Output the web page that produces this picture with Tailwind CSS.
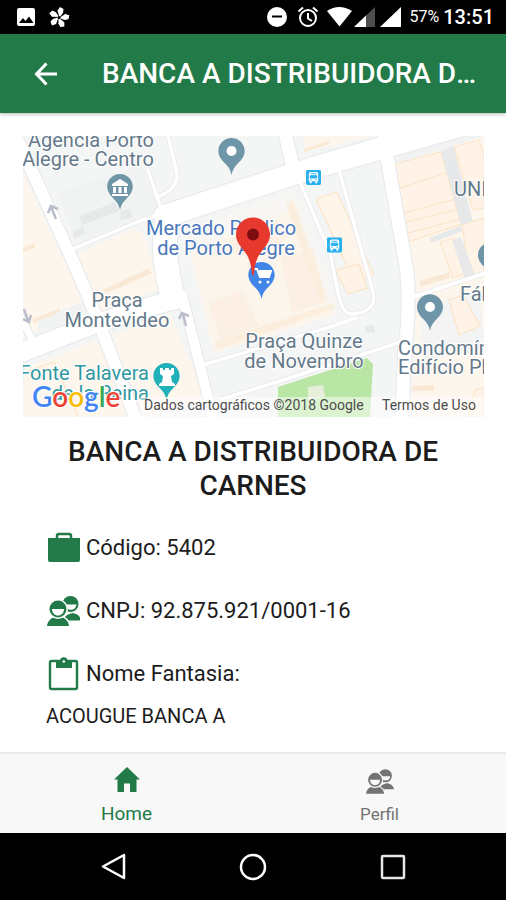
<!DOCTYPE html>
<html lang="pt-BR">
<head>
    <meta charset="UTF-8">
    <meta name="viewport" content="width=device-width, initial-scale=1.0">
    <title>Banca A Distribuidora de Carnes</title>
    <script src="https://cdn.jsdelivr.net/npm/@tailwindcss/browser@4"></script>
</head>
<body class="flex min-h-screen flex-col bg-white font-['Roboto',sans-serif] text-[#1c1c1c]">
    <svg class="hidden" aria-hidden="true">
        <symbol id="people" viewBox="0 0 34 30">
            <path d="M16 24.500c1-3.500 3-5.500 8-7l2-.5c4 1 7 2.500 8 7.500z" fill="currentColor"/>
            <circle cx="23.500" cy="8" r="8" fill="currentColor"/>
            <path d="M19 8.500h10.500c-.5 3.500-2.700 5.300-5.500 5.300s-5-2-5-5.300z" fill="var(--face)"/>
            <path d="M0 30c.5-4.500 3-7 6.500-8.500l4.500-1 4.500 1c3.500 1.500 6 4 6.500 8.500z" fill="currentColor" stroke="var(--face)" stroke-width="3" paint-order="stroke"/>
            <circle cx="11" cy="13" r="10" fill="var(--face)"/>
            <circle cx="11" cy="13" r="8.500" fill="currentColor"/>
            <path d="M5 13h12c0 4-2.700 6.500-6 6.500S5 17 5 13z" fill="var(--face)"/>
        </symbol>
        <symbol id="pin" viewBox="0 0 27 38">
            <path d="M13.500 0C6 0 0 6 0 13.300c0 5 3 9 6.500 12.500 4 4 6 7 7 12.200 1-5.200 3-8.200 7-12.200C24 22.300 27 18.300 27 13.300 27 6 21 0 13.500 0z" fill="currentColor"/>
        </symbol>
        <symbol id="bus" viewBox="0 0 16 16">
            <rect width="16" height="16" rx="1.500" fill="#29b0f0"/>
            <path d="M3 4.500Q3 2 5 2h6q2 0 2 2.500V12h-1v2h-2v-2H6v2H4v-2H3z" fill="#fff"/>
            <path d="M5 4h6M4.500 6h7v2.500h-7zM4.500 10.500h1.500M10 10.500h1.500" fill="#29b0f0" stroke="#29b0f0"/>
        </symbol>
        <symbol id="blade" viewBox="0 0 22 22">
            <path d="M11.500 11.500L9.500 4.500 12 1l3.500 2-.5 4z"/>
        </symbol>
    </svg>

    <!-- Status bar -->
    <div class="flex h-[34px] items-center justify-between bg-black pr-3 pl-4 text-white">
        <div class="flex items-center gap-3">
            <svg class="size-5" viewBox="0 0 20 20" fill="none">
                <rect x="1" y="1" width="18" height="18" rx="2" fill="#fff"/>
                <path d="M3 16l4-5 2.500 3 3.500-4.500 4.500 6.500z" fill="#000"/>
            </svg>
            <svg class="size-[22px]" viewBox="0 0 22 22" fill="#fff">
                <use href="#blade"/>
                <use href="#blade" transform="rotate(72 11 11.500)"/>
                <use href="#blade" transform="rotate(144 11 11.500)"/>
                <use href="#blade" transform="rotate(216 11 11.500)"/>
                <use href="#blade" transform="rotate(288 11 11.500)"/>
                <circle cx="11" cy="11.500" r="1.500" fill="#000"/>
            </svg>
        </div>
        <div class="flex items-center">
            <svg class="h-[22px] w-[136px]" viewBox="268 7 136 22" fill="#fff">
                <circle cx="279" cy="18" r="10"/>
                <path d="M274 17.500h10" stroke="#000" stroke-width="2"/>
                <g fill="none" stroke="#fff" stroke-width="2">
                    <circle cx="310" cy="19" r="8"/>
                    <path d="M310 14v5.500l4 2.500M300.500 12.500l4.500-4M319.500 12.500l-4.500-4"/>
                </g>
                <path d="M329 12q12-8 25 0l-12.500 15.500z"/>
                <path d="M377 8v20h-21z" fill="#4d4d4d"/>
                <path d="M368 16.500V28h-12z"/>
                <path d="M403 8v20h-21z"/>
            </svg>
            <span class="ml-2 text-base">57%</span>
            <span class="ml-1 text-xl font-medium">13:51</span>
        </div>
    </div>

    <!-- App header -->
    <header class="flex h-[79px] items-center bg-[#227a48] pr-6 pl-[34px] text-white shadow-[0_1px_4px_rgba(0,0,0,0.3)]">
        <button type="button" aria-label="Voltar" class="shrink-0">
            <svg class="size-6" viewBox="0 0 24 24" fill="none" stroke="#fff" stroke-width="3">
                <path d="M12.500 1.500L2.500 12l10 10.500M2.500 12H23"/>
            </svg>
        </button>
        <h1 class="ml-11 min-w-0 flex-1 truncate text-[28px] font-medium">BANCA A DISTRIBUIDORA DE CARNES</h1>
    </header>

    <main class="flex-1 px-[22px] pt-[23px]">
        <svg class="block w-full" viewBox="22 136 462 281" role="img" aria-label="Mapa" font-family="Roboto, sans-serif">
            <clipPath id="frame"><rect x="23" y="136" width="461" height="281"/></clipPath>
            <g clip-path="url(#frame)">
            <rect x="23" y="136" width="461" height="281" fill="#f4f5f5"/>
            <!-- Blocks -->
            <g fill="#fdf6ed">
                <path d="M23 172l48 103 16 35-64 28z"/>
                <path d="M76 254l60-26q12 10 14 25 4 22 14 35l-72 26z"/>
                <path d="M23 368l77-29 32 78H23z"/>
                <path d="M112 335l58-22 36 86-62 18z"/>
                <path d="M182 232l102-38 16 4 40 117-126 38z" fill="#f8f6f3"/>
                <path d="M303 136h70l-67 16z"/>
                <path d="M394 163l90-27v281h-72l4-130z"/>
            </g>
            <path d="M57 192l85-26 18 44-82 36zM38 320l45-18 5 10-50 20zM396 153l70-17h18l-88 28z" fill="#f1f3f3"/>
            <path d="M420 310l60-20 4 60-60 10z" fill="#f3f4f3"/>
            <!-- Building outlines -->
            <g fill="#fef3e6" stroke="#fbe5c9" stroke-width="1.200">
                <path d="M191 252l95-42 12 10 35 95-119 38z" fill="#fcf5eb" stroke="none"/>
                <path d="M209 303l33-13 17 36-39 14zM281 258l32-9 14 52-35 12zM228 240l50-20 8 20-49 18z" fill="#fbf0e3" stroke="none"/>
                <path d="M316 199l21-7 37 83-20 6z" fill="#fef5ea"/>
                <path d="M335 270l24-6 8 24-19 6z"/>
                <path d="M395 164l46-12 20 72-53 18z"/>
                <path d="M400 188l46-15M404 213l52-14M406 222l53-13M408 233l53-14" fill="none"/>
                <path d="M454 147l25-7 5 15v53l-11 2z"/>
                <path d="M440 242l14-4 13 35-14 5zM462 225l22-7v55l-14 4z"/>
                <path d="M449 300l14-5 17 31-21 9z"/>
                <path d="M475 390l9-2v29h-16z"/>
                <path d="M23 373l31-11 24 55M54 362l24 55" fill="none"/>
            </g>
            <g fill="#f9e8d4">
                <path d="M103 290l44-21 5 4-45 20zM33 319l27-11v4l-27 11zM23 247l12-3v4l-12 4zM420 281l30-9-1 6-29 9zM412 386l22-1v6h-22zM304 149l25-8v3l-25 8z"/>
                <path d="M214 342l119-39 1 6-118 41zM286 205l7-5 33 97-6 2z" fill="#fbeedd"/>
            </g>
            <g fill="#e6e8e9">
                <path d="M80 216l35-14 4 9-37 14zM73 232l10-5 2 7-11 4zM120 211l10-2 2 9-11 2z"/>
                <path d="M441 151l12-5 20 75-12 4zM429 238l31-12 3 5-32 12zM452 240l9-3 14 38-10 4z"/>
                <path d="M365 326l9-1 1 7-9 1z"/>
            </g>
            <path d="M278 387l89-29 6 6-3 53h-92z" fill="#b9e6a5"/>
            <path d="M308 387l15-2 2 12-17 3z" fill="#e7efda"/>

            <!-- Roads: a grey casing under a white fill -->
            <g fill="none" stroke="#e6e8eb" stroke-linejoin="round" stroke-linecap="round">
                <path d="M165 216l122-40 53-16 140-40" stroke-width="24"/>
                <path d="M10 357l84-33 78-24" stroke-width="21"/>
                <path d="M167 222q-6 30 6 76" stroke-width="26"/>
                <path d="M15 134l61 134 23 55 42 110" stroke-width="14"/>
                <path d="M182 295l35 138" stroke-width="12"/>
                <path d="M282 120l12 52M384 140l23 132q3 40-2 75l-4 85" stroke-width="15"/>
                <path d="M20 315l17 35" stroke-width="9"/>
                <path d="M73 249l64-27 24-8M148 170l14 42M158 197q20-8 19-24l-11-45M300 182l30 71 9 44q4 18 14 17 27-3 19-26l-33-118M203 365l127-38 26-9M222 399l55-17 124-40M404 300l85-28" stroke-width="5"/>
            </g>
            <g fill="none" stroke="#fff" stroke-linejoin="round" stroke-linecap="round">
                <path d="M165 216l122-40 53-16 140-40" stroke-width="22"/>
                <path d="M10 357l84-33 78-24" stroke-width="19"/>
                <path d="M167 222q-6 30 6 76" stroke-width="24"/>
                <path d="M15 134l61 134 23 55 42 110" stroke-width="12"/>
                <path d="M182 295l35 138" stroke-width="10"/>
                <path d="M282 120l12 52M384 140l23 132q3 40-2 75l-4 85" stroke-width="13"/>
                <path d="M20 315l17 35" stroke-width="7"/>
                <path d="M73 249l64-27 24-8M148 170l14 42M158 197q20-8 19-24l-11-45M300 182l30 71 9 44q4 18 14 17 27-3 19-26l-33-118M203 365l127-38 26-9M222 399l55-17 124-40M404 300l85-28" stroke-width="3.500"/>
            </g>
            <path d="M56 219l-5-12M48 213l3-7 7 3M186 326l-3-12M179 319l3-6 7 3M24 309l4 12M23 319l6 3 2-7" fill="none" stroke="#b9bdcc" stroke-width="2.500"/>

            <!-- Places -->
            <use href="#pin" x="107" y="174" width="26" height="36" color="#6f95a8"/>
            <path d="M112 184l8-5 8 5v2h-16zM113 187h3v6h-3zM118.500 187h3v6h-3zM124 187h3v6h-3zM112 194h16v2h-16z" fill="#fff"/>
            <use href="#pin" x="218" y="138" width="27" height="37" color="#6f95a8"/>
            <circle cx="231.500" cy="151" r="5" fill="#fff"/>
            <use href="#pin" x="417" y="294" width="26" height="37" color="#6f95a8"/>
            <circle cx="430" cy="307" r="5" fill="#fff"/>
            <use href="#pin" x="478" y="242" width="26" height="37" color="#6f95a8"/>
            <use href="#pin" x="153" y="363" width="27" height="37" color="#1fb0b9"/>
            <path d="M160 368h3v2h2v-2h4v2h2v-2h3v6l-3 2 1 6 3 2v2h-16v-2l3-2 1-6-3-2z" fill="#fff"/>
            <use href="#bus" x="306" y="170" width="15" height="15"/>
            <use href="#bus" x="327" y="237" width="15" height="16"/>

            <g font-size="20" fill="#64798a" stroke="#fff" stroke-width="2" paint-order="stroke" text-anchor="middle">
                <text x="91" y="147">Agência Porto</text>
                <text x="88" y="166">Alegre - Centro</text>
                <text x="117" y="307">Praça</text>
                <text x="117" y="327">Montevideo</text>
                <text x="304" y="348">Praça Quinze</text>
                <text x="304" y="368">de Novembro</text>
                <g text-anchor="start">
                    <text x="454" y="196">UNICRED</text>
                    <text x="460" y="301">Fábrica</text>
                    <text x="398" y="355">Condomínio</text>
                    <text x="398" y="374">Edifício Phenix</text>
                </g>
                <g fill="#4a76ba">
                    <text x="221" y="235">Mercado Público</text>
                    <text x="226" y="255">de Porto Alegre</text>
                </g>
                <g fill="#2f979f" text-anchor="end">
                    <text x="149" y="380">Fonte Talavera</text>
                    <text x="149" y="400">de la Reina</text>
                </g>
            </g>
            <use href="#pin" x="248" y="262" width="27" height="37" color="#4285e8"/>
            <path d="M253 269h4l3 8h9l2-6h-12" fill="none" stroke="#fff" stroke-width="2"/>
            <path d="M259 272h11l-2 6h-7z" fill="#fff"/>
            <circle cx="260" cy="282" r="1.500" fill="#fff"/><circle cx="268" cy="282" r="1.500" fill="#fff"/>
            <path d="M253 217.500c-9.500 0-17 7.500-17 17 0 6 3 10.500 7 15 5 6 8 12 9 24.500q1 3 2 0c1-12.500 4-18.500 9-24.500 4-4.500 7-9 7-15 0-9.500-7.500-17-17-17z" fill="#e8392f"/>
            <circle cx="253" cy="234.500" r="6" fill="#7d0d10"/>

            <rect x="140" y="397" width="344" height="20" fill="#fff" fill-opacity=".5"/>
            <text x="32" y="407" font-family="Lato, sans-serif" font-size="28" font-weight="600" stroke="#fff" stroke-width="2" paint-order="stroke"><tspan fill="#4285f4">G</tspan><tspan fill="#ea4335">o</tspan><tspan fill="#fbbc05">o</tspan><tspan fill="#4285f4">g</tspan><tspan fill="#34a853">l</tspan><tspan fill="#ea4335">e</tspan></text>
            <g font-size="14" fill="#4d4d4d">
                <text x="144" y="410">Dados cartográficos ©2018 Google</text>
                <text x="382" y="410">Termos de Uso</text>
            </g>
            </g>
        </svg>

        <div class="px-6">
            <h2 class="mt-[18px] text-center text-[28px] leading-[34px] font-medium">BANCA A DISTRIBUIDORA DE CARNES</h2>

            <ul class="mt-7 text-[22px]">
                <li class="flex h-[63px] items-start gap-[6px]">
                    <svg class="h-[34px] w-[34px] shrink-0" viewBox="46 530 34 34">
                        <path d="M57 538v-3q0-2 2-2h10q2 0 2 2v3" fill="none" stroke="#227a48" stroke-width="2.500"/>
                        <path d="M48 537h32v22q0 2-2 2H50q-2 0-2-2z" fill="#227a48"/>
                    </svg>
                    <span class="leading-[34px]">Código: 5402</span>
                </li>
                <li class="flex h-[63px] items-start gap-[6px]">
                    <svg class="h-[34px] w-[34px] shrink-0 text-[#227a48] [--face:#fff]"><use href="#people" x="1" y="2" width="34" height="30"/></svg>
                    <span class="leading-[34px]">CNPJ: 92.875.921/0001-16</span>
                </li>
                <li>
                    <div class="flex items-start gap-[6px]">
                        <svg class="h-[34px] w-[34px] shrink-0" viewBox="46 657 34 34">
                            <rect x="50" y="661" width="27" height="28" rx="1.500" fill="none" stroke="#227a48" stroke-width="2.400"/>
                            <path d="M56 661h4a3.700 3.700 0 0 1 7.500 0h4.500v7H56z" fill="#227a48"/>
                            <circle cx="63.800" cy="661.500" r="1.300" fill="#fff"/>
                        </svg>
                        <span class="leading-[34px]">Nome Fantasia:</span>
                    </div>
                    <p class="mt-2 text-[20px] leading-[34px]">ACOUGUE BANCA A</p>
                </li>
            </ul>
        </div>
    </main>

    <!-- Tabs -->
    <nav class="flex h-[81px] border-t-2 border-[#ececec] bg-[#f8f8f8]">
        <a href="#home" class="flex flex-1 flex-col items-center pt-3 text-[#227a48]">
            <svg class="h-7 w-7" viewBox="0 0 28 28" fill="currentColor">
                <path d="M14 1L1 13.500h3.500V26H11v-8.500h6V26h6.500V13.500H27z"/>
            </svg>
            <span class="mt-2 text-[19px] leading-6">Home</span>
        </a>
        <a href="#perfil" class="flex flex-1 flex-col items-center pt-3 text-[#737373]">
            <svg class="h-7 w-7 [--face:#f8f8f8]"><use href="#people" y="3" width="28" height="25"/></svg>
            <span class="mt-2 text-[17px] leading-6">Perfil</span>
        </a>
    </nav>

    <!-- Android navigation -->
    <div class="flex h-[67px] items-center justify-center gap-28 bg-black">
        <button type="button" aria-label="Voltar">
            <svg class="size-7" viewBox="0 0 28 28" fill="none" stroke="#fff" stroke-width="2.500" stroke-linejoin="round"><path d="M25 2v23L4 13.500z"/></svg>
        </button>
        <button type="button" aria-label="Início">
            <svg class="size-7" viewBox="0 0 28 28" fill="none" stroke="#fff" stroke-width="2.500"><circle cx="14" cy="14" r="12"/></svg>
        </button>
        <button type="button" aria-label="Recentes">
            <svg class="size-7" viewBox="0 0 28 28" fill="none" stroke="#e8e8e8" stroke-width="2.500"><rect x="3" y="3" width="22" height="22" rx="1"/></svg>
        </button>
    </div>
</body>
</html>
